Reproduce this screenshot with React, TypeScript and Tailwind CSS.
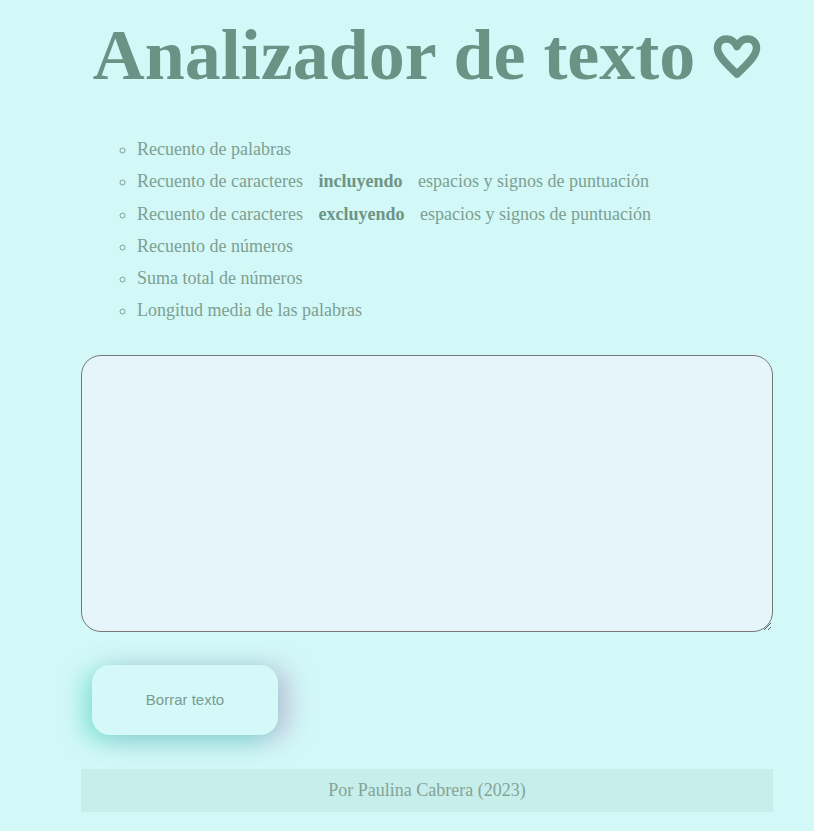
import React from "react";

function Heart() {
  return (
    <svg width="48" height="44" viewBox="0 0 48 44" className="inline-block align-baseline ml-[18px]">
      <path
        d="M24 39 C17 32 4.5 22 4.5 13 C4.5 7.5 8.5 4 13.5 4 C18.5 4 22 7.5 24 11.5 C26 7.5 29.5 4 34.5 4 C39.5 4 43.5 7.5 43.5 13 C43.5 22 31 32 24 39 Z"
        fill="none"
        stroke="#6b9385"
        strokeWidth="7.5"
        strokeLinejoin="round"
      />
    </svg>
  );
}

export default function App() {
  const serif = { fontFamily: '"Liberation Serif", "Times New Roman", serif' };
  return (
    <div className="min-h-[831px] w-full bg-[#d2f8f7] text-[#6b9385]" style={serif}>
      <div className="ml-[81px] w-[692px] flex flex-col">
        <h1 className="text-center text-[72px] font-bold leading-none pt-[19px] whitespace-nowrap">
          Analizador de texto<Heart />
        </h1>
        <ul className="mt-[48px] pl-[56px] list-[circle] text-[18px] text-[#7e9f92] flex flex-col gap-[12.3px] leading-[20px]">
          <li>Recuento de palabras</li>
          <li>
            Recuento de caracteres <b className="mx-[11px] text-[#6e9486]">incluyendo</b> espacios y signos de puntuación
          </li>
          <li>
            Recuento de caracteres <b className="mx-[11px] text-[#6e9486]">excluyendo</b> espacios y signos de puntuación
          </li>
          <li>Recuento de números</li>
          <li>Suma total de números</li>
          <li>Longitud media de las palabras</li>
        </ul>
        <textarea className="mt-[35px] h-[277px] w-full rounded-[20px] border border-[#777777] bg-[#e6f5f9] outline-none" />
        <div className="mt-[33px] pl-[11px]">
          <button
            className="h-[70px] w-[186px] rounded-[18px] bg-[#d4f9f8] text-[15px] text-[#7b9b8f] shadow-[-9px_6px_22px_rgba(90,220,200,0.6),11px_3px_24px_rgba(180,160,200,0.6)]"
            style={{ fontFamily: '"Liberation Sans", Arial, sans-serif' }}
          >
            Borrar texto
          </button>
        </div>
        <footer className="mt-[34px] h-[43px] bg-[#c6eeeb] flex items-center justify-center text-[18px] text-[#86a397]">
          Por Paulina Cabrera (2023)
        </footer>
      </div>
    </div>
  );
}
